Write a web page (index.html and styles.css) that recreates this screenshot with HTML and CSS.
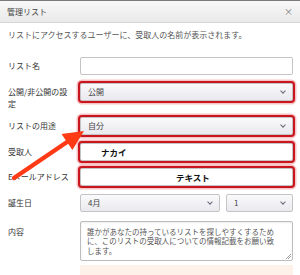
FILE: index.html
```html
<!DOCTYPE html>
<html lang="ja">
<head>
    <meta charset="UTF-8">
    <title>管理リスト</title>
    <link rel="stylesheet" href="styles.css">
</head>
<body>
    <div class="dialog">
        <div class="dialog-header">
            <span class="dialog-title">管理リスト</span>
            <span class="close">×</span>
        </div>

        <div class="dialog-body">
            <p class="intro">リストにアクセスするユーザーに、受取人の名前が表示されます。</p>

            <div class="row">
                <div class="label">リスト名</div>
                <div class="field input"></div>
            </div>

            <div class="row">
                <div class="label">公開/非公開の設<br>定</div>
                <div class="field select marked">公開<span class="chev"></span></div>
            </div>

            <div class="row">
                <div class="label">リストの用途</div>
                <div class="field select marked">自分<span class="chev"></span></div>
            </div>

            <div class="row">
                <div class="label">受取人</div>
                <div class="field input marked"><b class="fill fill-name">ナカイ</b></div>
            </div>

            <div class="row">
                <div class="label">Eメールアドレス</div>
                <div class="field input marked"><b class="fill fill-mail">テキスト</b></div>
            </div>

            <div class="row">
                <div class="label">誕生日</div>
                <div class="pair">
                    <div class="field select month">4月<span class="chev"></span></div>
                    <div class="field select day">1<span class="chev"></span></div>
                </div>
            </div>

            <div class="row row-text">
                <div class="label">内容</div>
                <div class="field textarea">誰かがあなたの持っているリストを探しやすくするために、このリストの受取人についての情報記載をお願い致します。<span class="grip"></span></div>
            </div>

            <div class="row">
                <div class="label"></div>
                <div class="notice"></div>
            </div>
        </div>

        <!-- annotation arrow -->
        <svg class="arrow" width="300" height="275" viewBox="0 0 300 275">
            <line x1="14" y1="178" x2="70" y2="140" stroke="#ff3b16" stroke-width="4.5" stroke-linecap="round"/>
            <polygon points="84,131 72.4,150 61.5,134" fill="#ff3b16"/>
        </svg>
    </div>
</body>
</html>
```

FILE: styles.css
```css
* {
    margin: 0;
    padding: 0;
    box-sizing: border-box;
}

body {
    font-family: "Noto Sans CJK JP", "Noto Sans", sans-serif;
    background-color: #ffffff;
    color: #333333;
    width: 300px;
    height: 275px;
    overflow: hidden;
}

.dialog {
    position: relative;
    height: 275px;
    border-top: 1px solid #7a7a7a;
}

.dialog-header {
    height: 22px;
    display: flex;
    align-items: center;
    justify-content: space-between;
    padding: 0 7px 0 7px;
    background: linear-gradient(#f8f8f8, #e9e9e9);
    border-bottom: 1px solid #d6d6d6;
}

.dialog-title {
    font-size: 8px;
    line-height: 11px;
    color: #444444;
}

.close {
    font-size: 9px;
    color: #777777;
    line-height: 11px;
}

.dialog-body {
    padding: 6px 7px 0 8px;
}

.intro {
    font-size: 8px;
    line-height: 11px;
    color: #555555;
    margin-bottom: 17px;
}

.row {
    display: flex;
    align-items: flex-start;
    margin-bottom: 7.5px;
}

.label {
    width: 72px;
    flex-shrink: 0;
    padding: 3px 8px 0 0;
    font-size: 8px;
    line-height: 12px;
    color: #333333;
}

.field {
    position: relative;
    flex: 1;
    height: 18px;
    border: 1px solid #c4c4c4;
    border-radius: 2px;
    background: #ffffff;
    font-size: 8px;
    line-height: 16px;
    color: #444444;
}

.select {
    padding-left: 7px;
    background: linear-gradient(#fafafc, #e9e9ee);
}

.chev {
    position: absolute;
    right: 7px;
    top: 5px;
    width: 4px;
    height: 4px;
    border-right: 1px solid #666677;
    border-bottom: 1px solid #666677;
    transform: rotate(45deg);
}

.marked {
    outline: 2.5px solid #c9151e;
    box-shadow: 0 0 0 3.5px rgba(235, 120, 125, 0.45);
}

.fill {
    display: block;
    font-size: 8.5px;
    line-height: 16px;
    color: #111111;
}

.fill-name {
    padding-left: 20px;
}

.fill-mail {
    padding-left: 95px;
}

.pair {
    flex: 1;
    display: flex;
    gap: 6px;
}

.month {
    flex: 0 0 140px;
}

.day {
    flex: 1;
}

.row-text {
    margin-top: 9px;
}

.row-text .label {
    padding-top: 5px;
}

.textarea {
    height: 40px;
    padding: 5px 15px 0 6px;
    font-size: 7.5px;
    line-height: 9.7px;
    color: #555555;
    border-color: #bdbdbd;
    box-shadow: inset 0 1px 2px rgba(0, 0, 0, 0.08);
}

.grip {
    position: absolute;
    right: 1px;
    bottom: 1px;
    width: 5px;
    height: 5px;
    background: linear-gradient(135deg, transparent 45%, #aaaaaa 45%, #aaaaaa 55%, transparent 55%, transparent 70%, #aaaaaa 70%, #aaaaaa 80%, transparent 80%);
}

.notice {
    flex: 1;
    height: 10px;
    margin-top: -3px;
    background-color: #fdf1ea;
}

.arrow {
    position: absolute;
    left: 0;
    top: -1px;
    pointer-events: none;
}
```
